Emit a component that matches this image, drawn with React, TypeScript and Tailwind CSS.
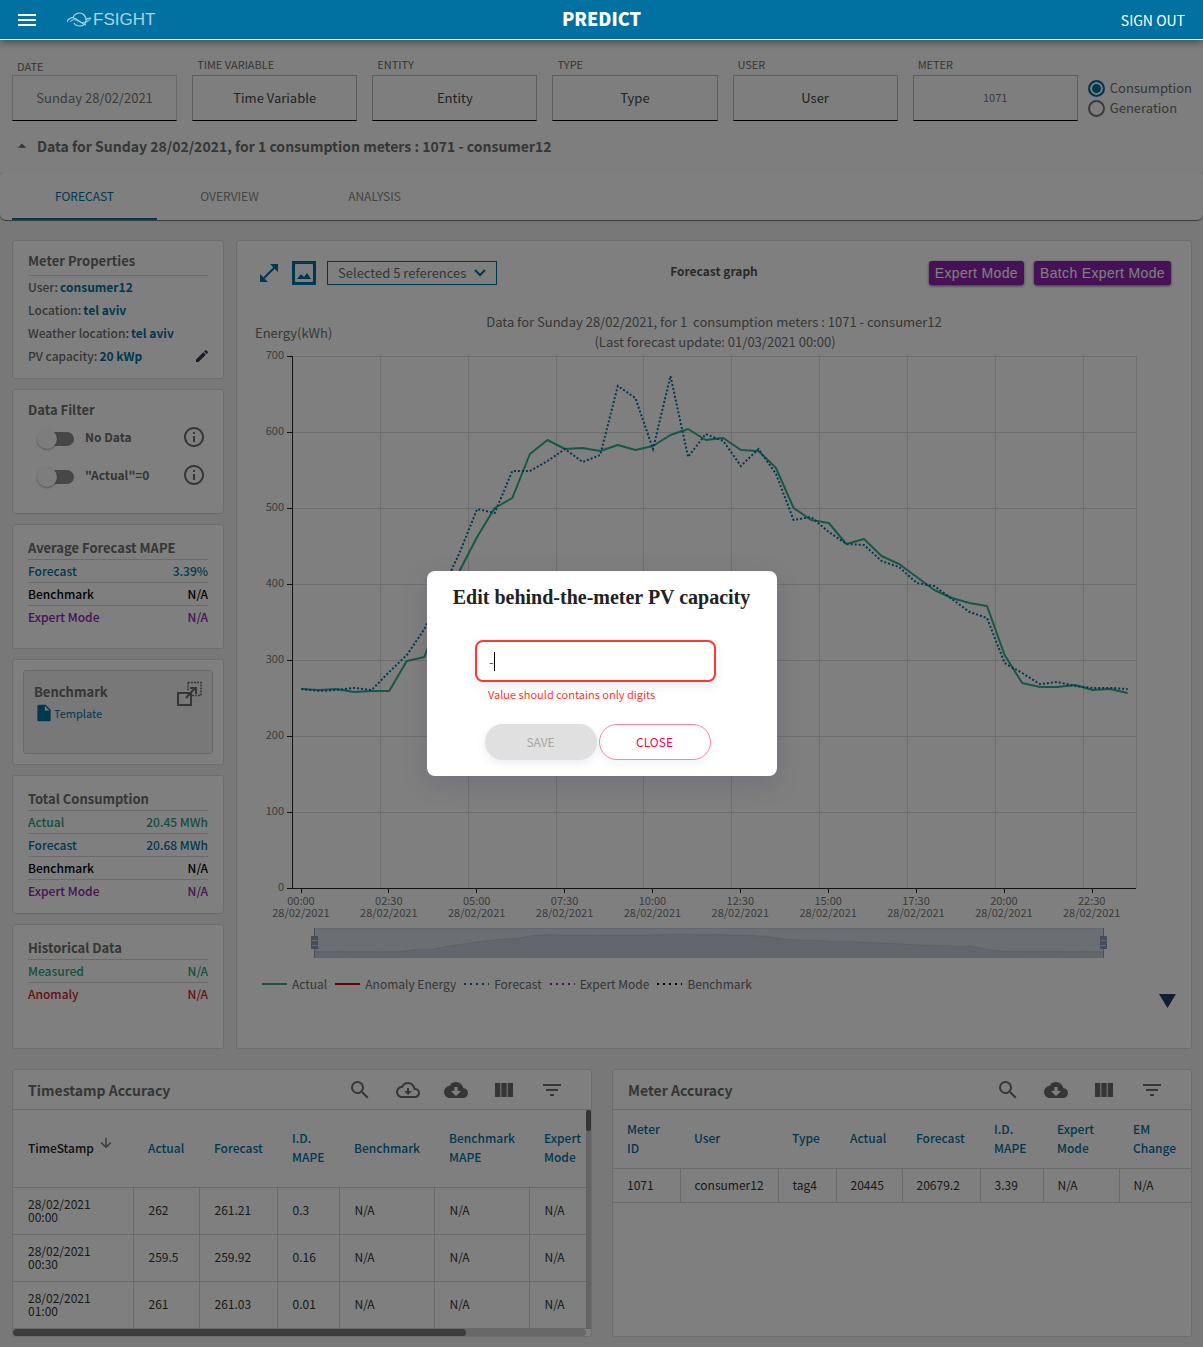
import type { ReactNode } from "react";
import {
  MdArrowDownward,
  MdArrowDropUp,
  MdEdit,
  MdFilterList,
  MdInfoOutline,
  MdInsertDriveFile,
  MdMenu,
  MdOpenInFull,
  MdSearch,
  MdViewColumn,
} from "react-icons/md";

const ACTUAL = [
  689, 690, 689, 692, 691, 691, 661, 657, 608, 571, 537, 508, 498, 454, 440, 449, 448, 451, 445, 450, 446, 435, 429,
  440, 438, 450, 451, 468, 508, 520, 523, 544, 539, 556, 564, 577, 590, 598, 603, 606, 655, 683, 687, 687, 685, 690,
  689, 693,
];
const FORECAST = [
  689, 691, 690, 688, 690, 672, 655, 629, 590, 553, 509, 513, 471, 471, 461, 449, 462, 455, 386, 398, 449, 376, 457,
  434, 441, 466, 449, 474, 520, 517, 532, 544, 545, 561, 567, 583, 586, 599, 612, 618, 663, 673, 684, 682, 686, 688,
  688, 689,
];

const STEP = 844 / 48;
const toPoints = (ys: number[]) => ys.map((y, i) => `${(292.5 + STEP * (i + 0.5)).toFixed(1)},${y}`).join(" ");
const MINI = ACTUAL.map(
  (y, i) => `${(314 + (790 / 47) * i).toFixed(1)},${(952 - ((693 - y) * 18) / 264).toFixed(1)}`,
).join(" ");

const TIMES = ["00:00", "02:30", "05:00", "07:30", "10:00", "12:30", "15:00", "17:30", "20:00", "22:30"];

function Chart() {
  return (
    <div className="mt-2.5">
      <svg viewBox="237 295 954 599" className="block w-full" role="img" aria-label="Forecast graph">
        <g fill="#6e6e6e" fontSize="13">
          <text x="714" y="327" textAnchor="middle" xmlSpace="preserve">
            {"Data for Sunday 28/02/2021, for 1  consumption meters : 1071 - consumer12"}
          </text>
          <text x="715" y="347" textAnchor="middle">
            (Last forecast update: 01/03/2021 00:00)
          </text>
          <text x="255" y="338">
            Energy(kWh)
          </text>
        </g>
        <g stroke="#dcdcdc" strokeWidth="1">
          {[0, 1, 2, 3, 4, 5, 6].map((n) => (
            <line key={n} x1="292" x2="1136" y1={356.5 + 76 * n} y2={356.5 + 76 * n} />
          ))}
          {[380, 468, 556, 643, 731, 819, 907, 995, 1083, 1136].map((x) => (
            <line key={x} x1={x + 0.5} x2={x + 0.5} y1="356" y2="888" />
          ))}
        </g>
        <polyline points={toPoints(ACTUAL)} fill="none" stroke="#2eae8c" strokeWidth="2" strokeLinejoin="bevel" />
        <polyline points={toPoints(FORECAST)} fill="none" stroke="#0071a0" strokeWidth="2" strokeDasharray="2 2" />
        <g stroke="#222222" strokeWidth="1">
          <line x1="292.5" x2="292.5" y1="356" y2="888" />
          <line x1="287" x2="1136" y1="888.5" y2="888.5" />
          {[0, 1, 2, 3, 4, 5, 6].map((n) => (
            <line key={n} x1="287" x2="292" y1={356.5 + 76 * n} y2={356.5 + 76 * n} />
          ))}
          {TIMES.map((t, n) => (
            <line key={t} x1={301.5 + 88 * n - (n > 0 ? 1 : 0)} x2={301.5 + 88 * n - (n > 0 ? 1 : 0)} y1="888" y2="893" />
          ))}
        </g>
        <g fill="#777777" fontSize="11">
          {[700, 600, 500, 400, 300, 200, 100, 0].map((v, n) => (
            <text key={v} x="284" y={359 + 76 * n} textAnchor="end">
              {v}
            </text>
          ))}
        </g>
      </svg>
      <ol className="grid grid-cols-10 pr-[5.8%] pl-[2.1%] text-center text-[11px] leading-3 text-[#777]">
        {TIMES.map((t) => (
          <li key={t} className="px-3">
            {`${t} 28/02/2021`}
          </li>
        ))}
      </ol>
      <svg viewBox="237 918 954 46" className="block w-full" role="img" aria-label="Visible time range">
        <rect x="314" y="928" width="790" height="30" fill="#d7dee8" />
        <polygon points={`314,958 ${MINI} 1104,958`} fill="#c6cddb" />
        <polyline points={MINI} fill="none" stroke="#bcc2cc" />
        <path d="M314 928.5h790" stroke="#c8ced8" />
        {[314, 1103].map((x) => (
          <g key={x}>
            <path d={`M${x + 0.5} 928v30`} stroke="#8d9db6" />
            <rect x={x - 3} y="936" width="7" height="13" fill="#8d9db6" />
            <path d={`M${x - 2} 940.5h5M${x - 2} 945.5h5`} stroke="#d5dbe6" />
          </g>
        ))}
      </svg>
    </div>
  );
}

function Field({ label, value, kind }: { label: string; value: string; kind?: "date" | "meter" }) {
  const id = label.toLowerCase().replace(" ", "-");
  return (
    <div className="flex min-w-0 flex-1 flex-col justify-end">
      <label
        htmlFor={id}
        className={`pl-[5px] text-[11px] leading-4 text-[#6c6c6c] ${kind === "date" ? "pb-px" : "pb-[3px]"}`}
      >
        {label}
      </label>
      <input
        id={id}
        readOnly
        value={value}
        className={`h-[46px] w-full border border-b-black bg-transparent pb-0.5 text-center ${
          kind === "date"
            ? "border-[#d2d2d2] text-[13px] text-[#777]"
            : kind === "meter"
              ? "border-[#bbb] text-[11px] text-[#777]"
              : "border-[#bbb] text-[13px] text-[#444]"
        }`}
      />
    </div>
  );
}

function Radio({ label, checked }: { label: string; checked?: boolean }) {
  return (
    <label className="flex h-5 items-center gap-[5px] text-[13px] text-[#6c6c6c]">
      <input
        type="radio"
        name="mode"
        defaultChecked={checked}
        className="size-[17px] shrink-0 appearance-none rounded-full border-2 border-[#757575] checked:border-[#0071a0] checked:bg-[#0071a0] checked:shadow-[inset_0_0_0_2px_white]"
      />
      {label}
    </label>
  );
}

const CARD = "rounded-[3px] border border-[#dadada] bg-white";

function StatCard({
  title,
  rows,
  height,
}: {
  title: string;
  rows: { name: string; value: string; color: string }[];
  height: string;
}) {
  return (
    <section className={`${CARD} ${height} px-[15px]`}>
      <h3 className="border-b border-[#d4d4d4] pt-[13px] pb-px text-[13px] leading-5 font-bold text-[#6c6c6c]">{title}</h3>
      {rows.map((r) => (
        <div
          key={r.name}
          className={`flex items-center justify-between border-b border-[#d4d4d4] pt-px pb-px text-[12px] leading-5 font-medium last:border-transparent ${r.color}`}
        >
          <span>{r.name}</span>
          <span>{r.value}</span>
        </div>
      ))}
    </section>
  );
}

function Toggle({ label }: { label: string }) {
  return (
    <div className="flex h-[38px] items-center justify-between pr-0.5 pb-1 pl-[9px]">
      <label className="flex items-center gap-[11px] text-[12px] font-bold text-[#6c6c6c]">
        <input
          type="checkbox"
          role="switch"
          className="relative mt-[3px] h-3.5 w-[37px] appearance-none before:absolute before:inset-y-0 before:right-0 before:left-1 before:rounded-full before:bg-[#8e8e8e] after:absolute after:-top-[3px] after:left-0 after:size-5 after:rounded-full after:bg-[#fafafa] after:shadow-[0_1px_2px_rgba(0,0,0,0.35)]"
        />
        {label}
      </label>
      <button type="button" aria-label={`About ${label}`} className="text-[#6c6c6c]">
        <MdInfoOutline size={24} />
      </button>
    </div>
  );
}

function CloudSolid() {
  return (
    <svg width="24" height="24" viewBox="0 0 24 24" fill="currentColor">
      <path
        fillRule="evenodd"
        d="M19.35 10.04A7.49 7.49 0 0 0 12 4C9.11 4 6.6 5.64 5.35 8.04A5.994 5.994 0 0 0 0 14c0 3.31 2.69 6 6 6h13c2.76 0 5-2.24 5-5 0-2.64-2.05-4.78-4.65-4.96zM17 13l-5 5-5-5h3.400V9h3.200v4z"
      />
    </svg>
  );
}

function CloudOutline() {
  return (
    <svg width="24" height="24" viewBox="0 0 24 24" fill="currentColor">
      <path d="M19.35 10.04A7.49 7.49 0 0 0 12 4C9.11 4 6.6 5.64 5.35 8.04A5.994 5.994 0 0 0 0 14c0 3.31 2.69 6 6 6h13c2.76 0 5-2.24 5-5 0-2.64-2.05-4.78-4.65-4.96zM19 18H6c-2.21 0-4-1.79-4-4 0-2.05 1.53-3.76 3.56-3.97l1.07-.11.5-.95A5.469 5.469 0 0 1 12 6c2.62 0 4.88 1.86 5.39 4.43l.3 1.5 1.53.11A2.98 2.98 0 0 1 22 15c0 1.65-1.35 3-3 3zm-6-8h-2v3H8l4 4 4-4h-3z" />
    </svg>
  );
}

function TableHeader({ title, children }: { title: string; children: ReactNode }) {
  return (
    <div className="flex h-10 items-center justify-between border-b border-[#d4d4d4] pr-[27px] pl-[15px]">
      <h3 className="pt-0.5 text-[14px] font-bold text-[#6c6c6c]">{title}</h3>
      <div className="flex items-center gap-6 text-[#6c6c6c]">{children}</div>
    </div>
  );
}

function IconButton({ label, children }: { label: string; children: ReactNode }) {
  return (
    <button type="button" aria-label={label} className="size-6">
      {children}
    </button>
  );
}

const TS_ROWS = [
  ["28/02/2021 00:00", "262", "261.21", "0.3", "N/A", "N/A", "N/A"],
  ["28/02/2021 00:30", "259.5", "259.92", "0.16", "N/A", "N/A", "N/A"],
  ["28/02/2021 01:00", "261", "261.03", "0.01", "N/A", "N/A", "N/A"],
];
const TS_HEAD = ["Actual", "Forecast", "I.D. MAPE", "Benchmark", "Benchmark MAPE", "Expert Mode"];
const METER_HEAD = ["Meter ID", "User", "Type", "Actual", "Forecast", "I.D. MAPE", "Expert Mode", "EM Change"];
const METER_ROW = ["1071", "consumer12", "tag4", "20445", "20679.2", "3.39", "N/A", "N/A"];

const LEGEND = [
  { name: "Actual", color: "#2eae8c", dash: undefined },
  { name: "Anomaly Energy", color: "#cc0000", dash: undefined },
  { name: "Forecast", color: "#0071a0", dash: "2 4" },
  { name: "Expert Mode", color: "#8e24aa", dash: "2 4" },
  { name: "Benchmark", color: "#000000", dash: "2 4" },
];

const BLUE = "text-[#0071a0]";
const GREEN = "text-[#2a9d7f]";
const PURPLE = "text-[#8e24aa]";

export default function App() {
  return (
    <div className="relative min-h-screen bg-[#f0f0f0] font-['Noto_Sans_CJK_SC','Open_Sans',sans-serif]">
      <header className="relative z-20 grid h-10 grid-cols-[1fr_auto_1fr] items-center border-b border-white bg-[#0071a0] px-[18px] text-white shadow-[0_2px_8px_rgba(0,0,0,0.45)]">
        <div className="flex items-center gap-7">
          <button type="button" aria-label="Menu" className="-ml-[3px]">
            <MdMenu size={24} />
          </button>
          <a href="#home" className="flex items-center text-[#a9d6e8]">
            <svg width="26" height="16" viewBox="0 0 26 16" fill="none" stroke="currentColor" strokeWidth="1.200">
              <path d="M0 10c1-3 4-5 7-4 4 1 7 6 12 7" />
              <path d="M3 10c2-3 5-3 8-1s8 3 13-3" opacity=".7" />
              <path d="M6 6c1-4 4-5 7-5s6 3 6 7-3 6-6 6-5-1-6-3" />
              <path d="M19 8c1-2 3-2 5-2" />
            </svg>
            <span className="font-['Liberation_Sans',sans-serif] text-[17px] leading-5">FSIGHT</span>
          </a>
        </div>
        <h1 className="pb-1 text-[18px] leading-5 font-black">PREDICT</h1>
        <button type="button" className="justify-self-end pt-0.5 text-[14px]">
          SIGN OUT
        </button>
      </header>

      <div className="bg-[#fdfdfd]">
        <div className="flex gap-[10px] pt-4 pr-[11px] pl-3">
          <div className="flex min-w-0 flex-1 gap-[15px]">
            <Field label="DATE" value="Sunday 28/02/2021" kind="date" />
            <Field label="TIME VARIABLE" value="Time Variable" />
            <Field label="ENTITY" value="Entity" />
            <Field label="TYPE" value="Type" />
            <Field label="USER" value="User" />
            <Field label="METER" value="1071" kind="meter" />
          </div>
          <fieldset className="flex w-[103px] flex-col justify-end pb-[3px]">
            <Radio label="Consumption" checked />
            <Radio label="Generation" />
          </fieldset>
        </div>
        <div className="flex h-[51px] items-center gap-[5px] px-3">
          <button type="button" aria-label="Collapse" className="pb-0.5 text-[#6c6c6c]">
            <MdArrowDropUp size={20} />
          </button>
          <h2 className="text-[14px] font-bold text-[#6c6c6c]">
            Data for Sunday 28/02/2021, for 1 consumption meters : 1071 - consumer12
          </h2>
        </div>
      </div>

      <nav className="flex h-12 rounded-md bg-white px-3 text-[12px] shadow-[0_1px_1px_rgba(0,0,0,0.5)]">
        <a href="#forecast" className="flex w-[145px] items-center justify-center border-b-2 border-[#0071a0] pt-0.5 text-[#0071a0]">
          FORECAST
        </a>
        <a href="#overview" className="flex w-[145px] items-center justify-center text-[#888]">
          OVERVIEW
        </a>
        <a href="#analysis" className="flex w-[145px] items-center justify-center text-[#888]">
          ANALYSIS
        </a>
      </nav>

      <main className="pt-5 pr-[11px] pb-[11px] pl-3">
        <div className="flex gap-3">
          <aside className="flex w-[212px] shrink-0 flex-col gap-2.5">
            <section className={`${CARD} min-h-[139px] px-[15px] text-[12px] text-[#6c6c6c]`}>
              <h3 className="border-b border-[#d4d4d4] pt-2.5 pb-1 text-[13px] leading-5 font-bold">Meter Properties</h3>
              {[
                ["User:", "consumer12"],
                ["Location:", "tel aviv"],
                ["Weather location:", "tel aviv"],
                ["PV capacity:", "20 kWp"],
              ].map(([name, value], i) => (
                <div key={name} className="flex items-center gap-0.5 pt-px pb-0.5 leading-5 font-medium">
                  <span>{name}</span>
                  <span className="font-bold text-[#0071a0]">{value}</span>
                  {i === 3 && (
                    <button type="button" aria-label="Edit PV capacity" className="-mr-0.5 ml-auto text-[#3d3557]">
                      <MdEdit size={16} />
                    </button>
                  )}
                </div>
              ))}
            </section>

            <section className={`${CARD} min-h-[125px] px-[15px]`}>
              <h3 className="pt-2.5 text-[13px] leading-5 font-bold text-[#6c6c6c]">Data Filter</h3>
              <Toggle label="No Data" />
              <Toggle label={'"Actual"=0'} />
            </section>

            <StatCard
              title="Average Forecast MAPE"
              height="min-h-[125px]"
              rows={[
                { name: "Forecast", value: "3.39%", color: BLUE },
                { name: "Benchmark", value: "N/A", color: "text-black" },
                { name: "Expert Mode", value: "N/A", color: PURPLE },
              ]}
            />

            <section className={`${CARD} min-h-[106px] p-2.5`}>
              <div className="flex h-[84px] justify-between rounded-[3px] border border-[#d4d4d4] bg-[#f0f0f0] p-2.5">
                <div>
                  <h3 className="pt-px text-[13px] leading-5 font-bold text-[#6c6c6c]">Benchmark</h3>
                  <a href="#template" className="flex items-center text-[11px] leading-[22px] text-[#0071a0]">
                    <MdInsertDriveFile size={20} />
                    Template
                  </a>
                </div>
                <button type="button" aria-label="Resize benchmark" className="h-[26px] text-[#6c6c6c]">
                  <svg width="26" height="26" viewBox="0 0 26 26" fill="none" stroke="currentColor" strokeWidth="2">
                    <path d="M2 12h13v12H2z" />
                    <path d="M12 1.500h13v13h-9M12 1.500v9" strokeDasharray="2 1" strokeWidth="1.500" />
                    <path d="M10 17l9-10M14 7h6v6" />
                  </svg>
                </button>
              </div>
            </section>

            <StatCard
              title="Total Consumption"
              height="min-h-[139px]"
              rows={[
                { name: "Actual", value: "20.45 MWh", color: GREEN },
                { name: "Forecast", value: "20.68 MWh", color: BLUE },
                { name: "Benchmark", value: "N/A", color: "text-black" },
                { name: "Expert Mode", value: "N/A", color: PURPLE },
              ]}
            />
            <StatCard
              title="Historical Data"
              height="min-h-[125px]"
              rows={[
                { name: "Measured", value: "N/A", color: GREEN },
                { name: "Anomaly", value: "N/A", color: "text-[#cf1c28]" },
              ]}
            />
          </aside>

          <section className={`${CARD} min-w-0 flex-1`}>
            <div className="grid grid-cols-[1fr_auto_1fr] items-start px-5 pt-5">
              <div className="flex h-6 items-center gap-[11px] text-[#0071a0]">
                <button type="button" aria-label="Full screen">
                  <MdOpenInFull size={24} />
                </button>
                <button type="button" aria-label="Save as picture">
                  <svg width="24" height="24" viewBox="0 0 24 24" fill="currentColor">
                    <path fillRule="evenodd" d="M0 0h24v24H0zM4 3a1 1 0 0 0-1 1v16a1 1 0 0 0 1 1h16a1 1 0 0 0 1-1V4a1 1 0 0 0-1-1z" />
                    <path d="M5 18l4-5 3 3 3-4 4 6z" />
                  </svg>
                </button>
                <div className="relative">
                  <select
                    aria-label="References"
                    className="block h-6 w-[170px] appearance-none border border-[#0071a0] bg-white pl-2.5 text-[13px] leading-5 text-[#6c6c6c]"
                  >
                    <option>Selected 5 references</option>
                  </select>
                  <svg
                    width="12"
                    height="8"
                    viewBox="0 0 12 8"
                    className="pointer-events-none absolute top-2 right-[11px]"
                    fill="none"
                    stroke="currentColor"
                    strokeWidth="2"
                  >
                    <path d="M1 1l5 5 5-5" />
                  </svg>
                </div>
              </div>
              <h3 className="text-[12px] leading-5 font-bold text-[#555]">Forecast graph</h3>
              <div className="flex justify-end gap-2.5 font-['Liberation_Sans',sans-serif] text-[14px] text-white">
                <button type="button" className="h-6 rounded-[3px] bg-[#8e24aa] px-1.5 tracking-wide shadow-[0_1px_3px_rgba(0,0,0,0.6)]">
                  Expert Mode
                </button>
                <button type="button" className="h-6 rounded-[3px] bg-[#8e24aa] px-1.5 tracking-wide shadow-[0_1px_3px_rgba(0,0,0,0.6)]">
                  Batch Expert Mode
                </button>
              </div>
            </div>
            <Chart />
            <div className="flex items-start justify-between pt-2.5 pr-[15px] pl-[25px]">
              <ul className="flex gap-2 text-[12px] leading-5 text-[#6c6c6c]">
                {LEGEND.map((l) => (
                  <li key={l.name} className="flex items-center gap-[5px]">
                    <svg width="25" height="4" viewBox="0 0 25 4">
                      <line x1="0" x2="25" y1="2" y2="2" stroke={l.color} strokeWidth="2" strokeDasharray={l.dash} />
                    </svg>
                    {l.name}
                  </li>
                ))}
              </ul>
              <button type="button" aria-label="Show more" className="pt-5">
                <svg width="17" height="14" viewBox="0 0 17 14" fill="#1d3f66">
                  <path d="M0 0h17l-8.500 14z" />
                </svg>
              </button>
            </div>
          </section>
        </div>

        <div className="mt-5 grid grid-cols-2 gap-5">
          <section className={`${CARD} flex min-h-[267px] flex-col`}>
            <TableHeader title="Timestamp Accuracy">
              <IconButton label="Search">
                <MdSearch size={24} />
              </IconButton>
              <IconButton label="Export all">
                <CloudOutline />
              </IconButton>
              <IconButton label="Download">
                <CloudSolid />
              </IconButton>
              <IconButton label="Columns">
                <MdViewColumn size={24} />
              </IconButton>
              <IconButton label="Filter">
                <MdFilterList size={24} />
              </IconButton>
            </TableHeader>
            <div className="flex">
              <table className="min-w-0 flex-1 table-fixed border-collapse text-left text-[12px] text-[#333]">
                <colgroup>
                  <col className="w-[120px]" />
                  <col className="w-[66px]" />
                  <col className="w-[78px]" />
                  <col className="w-[62px]" />
                  <col className="w-[95px]" />
                  <col className="w-[95px]" />
                  <col />
                </colgroup>
                <thead>
                  <tr className="h-[77px] border-b border-[#d4d4d4] leading-[19px] text-[#0071a0]">
                    <th scope="col" className="pb-0.5 pl-[15px] font-medium text-[#222]">
                      <span className="flex items-center gap-1">
                        TimeStamp
                        <MdArrowDownward size={16} className="mb-2 text-[#6c6c6c]" />
                      </span>
                    </th>
                    {TS_HEAD.map((h) => (
                      <th key={h} scope="col" className="pb-0.5 pl-[15px] font-medium">
                        {h}
                      </th>
                    ))}
                  </tr>
                </thead>
                <tbody>
                  {TS_ROWS.map((row) => (
                    <tr key={row[0]} className="h-[47px] border-b border-[#d4d4d4] leading-[13px]">
                      {row.map((c, i) => (
                        <td
                          key={i}
                          className="border-r border-[#d4d4d4] pr-5 pb-0.5 pl-[15px] last:border-r-0 last:pr-0"
                        >
                          {c}
                        </td>
                      ))}
                    </tr>
                  ))}
                </tbody>
              </table>
              <div className="w-[5px] bg-[#c8c8c8]">
                <div className="h-[21px] rounded-full bg-[#6a6a6a]" />
              </div>
            </div>
            <div className="mr-[5px] h-[7px] rounded-full bg-[#d0d0d0]">
              <div className="h-full w-[79%] rounded-full bg-[#787878]" />
            </div>
          </section>

          <section className={`${CARD} flex min-h-[267px] flex-col`}>
            <TableHeader title="Meter Accuracy">
              <IconButton label="Search">
                <MdSearch size={24} />
              </IconButton>
              <IconButton label="Download">
                <CloudSolid />
              </IconButton>
              <IconButton label="Columns">
                <MdViewColumn size={24} />
              </IconButton>
              <IconButton label="Filter">
                <MdFilterList size={24} />
              </IconButton>
            </TableHeader>
            <table className="w-full table-fixed border-collapse text-left text-[12px] text-[#333]">
              <colgroup>
                <col className="w-[67px]" />
                <col className="w-[98px]" />
                <col className="w-[58px]" />
                <col className="w-[66px]" />
                <col className="w-[78px]" />
                <col className="w-[63px]" />
                <col className="w-[76px]" />
                <col />
              </colgroup>
              <thead>
                <tr className="h-[58px] border-b border-[#d4d4d4] leading-[19px] text-[#0071a0]">
                  {METER_HEAD.map((h) => (
                    <th key={h} scope="col" className="pb-0.5 pl-[14px] font-medium first:pr-4">
                      {h}
                    </th>
                  ))}
                </tr>
              </thead>
              <tbody>
                <tr className="h-[34px] border-b border-[#d4d4d4]">
                  {METER_ROW.map((c, i) => (
                    <td key={i} className="border-r border-[#d4d4d4] pl-[14px] last:border-r-0">
                      {c}
                    </td>
                  ))}
                </tr>
              </tbody>
            </table>
          </section>
        </div>
      </main>

      <div className="absolute inset-0 z-10 flex items-center justify-center bg-black/50">
        <div
          role="dialog"
          aria-modal="true"
          aria-labelledby="dialog-title"
          className="flex w-[350px] flex-col items-center rounded-lg bg-white pt-[15px] pb-4 shadow-[0_8px_24px_rgba(60,60,110,0.2)]"
        >
          <h2 id="dialog-title" className="font-['Liberation_Serif',serif] text-[20px] leading-[22px] font-bold text-[#222]">
            Edit behind-the-meter PV capacity
          </h2>
          <div className="mt-8 mr-3 w-[241px]">
            <div className="relative">
              <input
                id="pv-capacity"
                aria-label="PV capacity"
                aria-invalid="true"
                aria-describedby="pv-error"
                defaultValue="-"
                className="h-[42px] w-full rounded-lg border-2 border-[#f93a31] bg-white px-3 text-[13px] text-[#555] shadow-[0_4px_10px_rgba(80,90,150,0.12)] outline-none"
              />
              <span className="absolute top-3 left-[19px] h-[19px] w-px bg-black" />
            </div>
            <p id="pv-error" className="mt-1 pl-[13px] text-[11px] leading-4 text-[#f93a31]">
              Value should contains only digits
            </p>
          </div>
          <div className="mt-[22px] mr-2 flex gap-0.5 text-[12px]">
            <button
              type="button"
              disabled
              className="h-9 w-28 rounded-full bg-[#e0e0e0] text-[#a6a6a6] shadow-[0_3px_8px_rgba(80,90,150,0.12)]"
            >
              SAVE
            </button>
            <button
              type="button"
              className="h-9 w-28 rounded-full border border-[#f984ab] bg-white text-[#f50057] shadow-[0_3px_8px_rgba(80,90,150,0.08)]"
            >
              CLOSE
            </button>
          </div>
        </div>
      </div>
    </div>
  );
}
